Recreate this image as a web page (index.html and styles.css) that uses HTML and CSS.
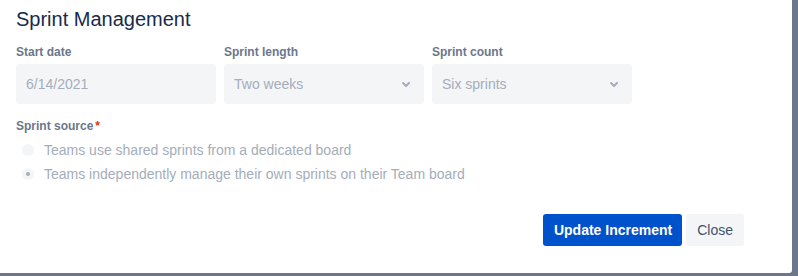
FILE: index.html
```html
<!DOCTYPE html>
<html lang="en">
<head>
    <meta charset="UTF-8">
    <title>Sprint Management</title>
    <link rel="stylesheet" href="styles.css">
</head>
<body>
    <div class="dialog">
        <h1 class="title">Sprint Management</h1>

        <!-- 날짜 / 길이 / 개수 -->
        <div class="fields">
            <div class="field">
                <label class="lbl">Start date</label>
                <div class="box">6/14/2021</div>
            </div>
            <div class="field">
                <label class="lbl">Sprint length</label>
                <div class="box">Two weeks
                    <svg class="chev" width="24" height="24" viewBox="0 0 24 24"><path d="M8.3 10.3a1 1 0 0 1 1.4 0L12 12.6l2.3-2.3a1 1 0 1 1 1.4 1.4l-3 3a1 1 0 0 1-1.4 0l-3-3a1 1 0 0 1 0-1.4z" fill="currentColor"/></svg>
                </div>
            </div>
            <div class="field">
                <label class="lbl">Sprint count</label>
                <div class="box">Six sprints
                    <svg class="chev" width="24" height="24" viewBox="0 0 24 24"><path d="M8.3 10.3a1 1 0 0 1 1.4 0L12 12.6l2.3-2.3a1 1 0 1 1 1.4 1.4l-3 3a1 1 0 0 1-1.4 0l-3-3a1 1 0 0 1 0-1.4z" fill="currentColor"/></svg>
                </div>
            </div>
        </div>

        <!-- 스프린트 소스 -->
        <div class="source">
            <div class="lbl">Sprint source<span class="req">*</span></div>
            <div class="radio"><span class="dot"></span>Teams use shared sprints from a dedicated board</div>
            <div class="radio"><span class="dot on"></span>Teams independently manage their own sprints on their Team board</div>
        </div>

        <div class="footer">
            <button class="btn primary">Update Increment</button>
            <button class="btn">Close</button>
        </div>
    </div>
</body>
</html>
```

FILE: styles.css
```css
body{
    margin: 0;
    width: 798px;
    height: 276px;
    overflow: hidden;
    background-color: #6b778c;
    font-family: "Liberation Sans", Arial, sans-serif;
}

/* 다이얼로그 박스 */
.dialog{
    width: 760px;
    height: 273px;
    padding: 0 16px;
    background-color: #fff;
    border-radius: 0 0 3px 0;
    box-sizing: content-box;
}

.title{
    margin: 0;
    padding-top: 5px;
    font-size: 20px;
    font-weight: 400;
    line-height: 28px;
    color: #172b4d;
}

.fields{
    display: flex;
    gap: 8px;
    margin-top: 11px;
}

.field{
    width: 200px;
}

.lbl{
    display: block;
    font-size: 12px;
    font-weight: 600;
    line-height: 16px;
    color: #6b778c;
    margin-bottom: 4px;
}

.box{
    display: flex;
    align-items: center;
    justify-content: space-between;
    height: 40px;
    padding: 0 10px;
    background-color: #f4f5f7;
    border-radius: 3px;
    font-size: 14px;
    color: #a5adba;
}

.chev{
    color: #a5adba;
    margin-right: -4px;
}

.source{
    margin-top: 14px;
}

.req{
    color: #de350b;
    margin-left: 2px;
}

.radio{
    display: flex;
    align-items: center;
    height: 24px;
    font-size: 14px;
    color: #a5adba;
}

/* 라디오 동그라미 */
.dot{
    width: 12px;
    height: 12px;
    margin: 0 10px 0 6px;
    border-radius: 50%;
    background-color: #f4f5f7;
    position: relative;
}

.dot.on::after{
    content: "";
    position: absolute;
    top: 4px;
    left: 4px;
    width: 4px;
    height: 4px;
    border-radius: 50%;
    background-color: #a5adba;
}

.footer{
    display: flex;
    justify-content: flex-end;
    gap: 4px;
    margin-top: 28px;
    padding-right: 32px;
}

.btn{
    height: 32px;
    padding: 0 11px;
    border: 0;
    border-radius: 3px;
    font-family: inherit;
    font-size: 14px;
    font-weight: 400;
    color: #42526e;
    background-color: #f4f5f7;
}

.primary{
    padding: 0 10px 0 11px;
    font-weight: 700;
    color: #fff;
    background-color: #0052cc;
}
```
